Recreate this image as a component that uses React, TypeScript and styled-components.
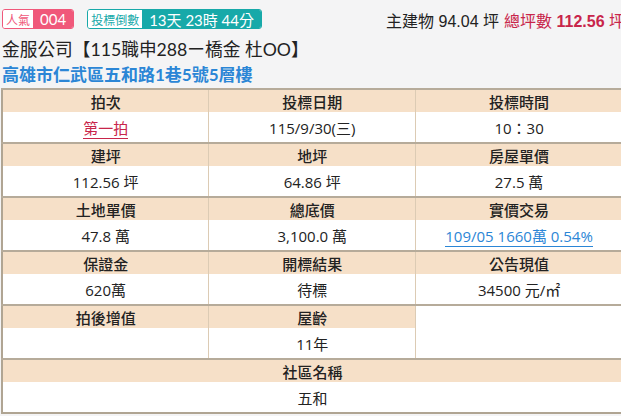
import React from "react";
import styled, { createGlobalStyle } from "styled-components";

const Global = createGlobalStyle`
  html, body { margin: 0; padding: 0; background: #f4f4f5; overflow: hidden; }
  body { font-family: "Lato", "Noto Sans CJK TC", sans-serif; color: #222; }
`;

const Page = styled.div`
  width: 630px;
  padding: 9px 0 0 1px;
  box-sizing: border-box;
`;

const TopBar = styled.div`
  display: flex;
  align-items: center;
  height: 20px;
  padding-left: 1px;
`;

const Badge = styled.div<{ $c: string }>`
  display: flex;
  align-items: stretch;
  height: 20px;
  border: 1px solid ${(p) => p.$c};
  border-radius: 3px;
  box-sizing: border-box;
  overflow: hidden;
  margin-right: 13px;
`;

const BadgeLabel = styled.span<{ $c: string }>`
  display: flex;
  align-items: center;
  background: #fff;
  color: ${(p) => p.$c};
  font-family: "Noto Sans CJK TC", sans-serif;
  font-size: 12px;
  padding: 0 3px 0 3px;
`;

const BadgeValue = styled.span<{ $c: string; $size: number }>`
  display: flex;
  align-items: center;
  background: ${(p) => p.$c};
  color: #fff;
  font-family: "Lato", "Noto Sans CJK TC", sans-serif;
  font-size: ${(p) => p.$size}px;
  padding: 0 7px;
`;

const Area = styled.div`
  margin-left: auto;
  padding-right: 5px;
  font-family: "Liberation Sans", "Noto Sans CJK TC", sans-serif;
  font-size: 16px;
  color: #222;
  white-space: nowrap;
  margin-top: 2px;
`;

const Total = styled.span`
  color: #c8254a;
  margin-left: 5px;
`;

const Title = styled.div`
  margin-top: 9px;
  padding-left: 1px;
  font-size: 17.7px;
  line-height: 24px;
  color: #222;
  white-space: nowrap;
`;

const Address = styled.div`
  padding-left: 1px;
  font-size: 17px;
  line-height: 26px;
  font-weight: 700;
  color: #2b86d6;
  white-space: nowrap;
`;

const Table = styled.table`
  margin-top: 0px;
  width: 622px;
  border-collapse: collapse;
  table-layout: fixed;
  font-family: "Open Sans", "Noto Sans CJK TC", sans-serif;
  font-size: 14px;
  border-left: 2px solid #b0a593;
  border-bottom: 2px solid #b0a593;
`;

const Head = styled.th`
  background: #f6e0c8;
  height: 22px;
  padding: 0;
  font-family: "Noto Sans CJK TC", sans-serif;
  font-weight: 500;
  font-size: 15px;
  color: #222;
  text-align: center;
  border-top: 2px solid #b6ab9a;
  border-right: 1px solid #dccbb4;
`;

const Cell = styled.td<{ $topRule?: boolean }>`
  background: #fff;
  height: 30px;
  padding: 0;
  text-align: center;
  color: #222;
  font-size: 15px;
  border-right: 1px solid #dccbb4;
  border-top: ${(p) => (p.$topRule ? "2px solid #b6ab9a" : "none")};
`;

const LinkText = styled.span<{ $c: string }>`
  color: ${(p) => p.$c};
  border-bottom: 1.5px solid ${(p) => p.$c};
  padding-bottom: 0px;
`;

type Item = { h: string; v: React.ReactNode };

const rows: Item[][] = [
  [
    { h: "拍次", v: <LinkText $c="#c8254a">第一拍</LinkText> },
    { h: "投標日期", v: "115/9/30(三)" },
    { h: "投標時間", v: "10：30" },
  ],
  [
    { h: "建坪", v: "112.56 坪" },
    { h: "地坪", v: "64.86 坪" },
    { h: "房屋單價", v: "27.5 萬" },
  ],
  [
    { h: "土地單價", v: "47.8 萬" },
    { h: "總底價", v: "3,100.0 萬" },
    { h: "實價交易", v: <LinkText $c="#2b86d6">109/05 1660萬 0.54%</LinkText> },
  ],
  [
    { h: "保證金", v: "620萬" },
    { h: "開標結果", v: "待標" },
    { h: "公告現值", v: "34500 元/㎡" },
  ],
];

export default function App() {
  return (
    <Page>
      <Global />
      <TopBar>
        <Badge $c="#f0587a">
          <BadgeLabel $c="#f0587a">人氣</BadgeLabel>
          <BadgeValue $c="#f0587a" $size={15}>004</BadgeValue>
        </Badge>
        <Badge $c="#17a9a9">
          <BadgeLabel $c="#17a9a9">投標倒數</BadgeLabel>
          <BadgeValue $c="#17a9a9" $size={15}>13天 23時 44分</BadgeValue>
        </Badge>
        <Area>
          主建物 94.04 坪<Total>總坪數 <b>112.56</b> 坪</Total>
        </Area>
      </TopBar>
      <Title>金服公司【115職申288ー橋金 杜OO】</Title>
      <Address>高雄市仁武區五和路1巷5號5層樓</Address>
      <Table>
        <tbody>
          {rows.map((r, i) => (
            <React.Fragment key={i}>
              <tr>
                {r.map((c) => (
                  <Head key={c.h}>{c.h}</Head>
                ))}
              </tr>
              <tr>
                {r.map((c) => (
                  <Cell key={c.h}>{c.v}</Cell>
                ))}
              </tr>
            </React.Fragment>
          ))}
          <tr>
            <Head>拍後增值</Head>
            <Head>屋齡</Head>
            <Cell rowSpan={2} $topRule />
          </tr>
          <tr>
            <Cell />
            <Cell>11年</Cell>
          </tr>
          <tr>
            <Head colSpan={3}>社區名稱</Head>
          </tr>
          <tr>
            <Cell colSpan={3}>五和</Cell>
          </tr>
        </tbody>
      </Table>
    </Page>
  );
}
